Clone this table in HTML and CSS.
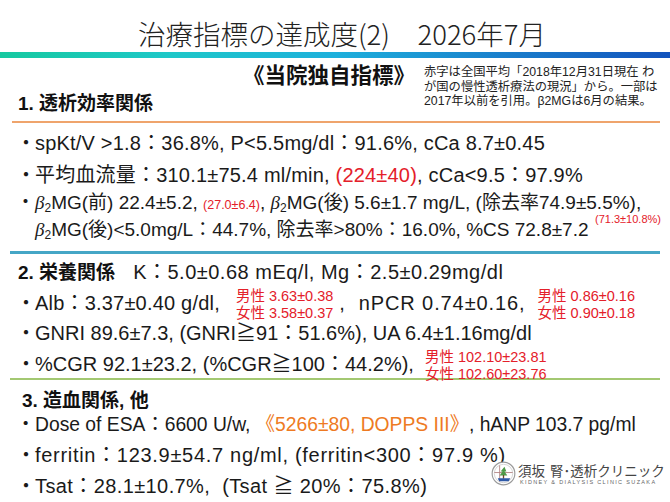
FILE: index.html
```html
<!DOCTYPE html>
<html lang="ja">
<head>
<meta charset="utf-8">
<link rel="stylesheet" href="styles.css">
</head>
<body>
<div class="page">
  <h1 class="title">治療指標の達成度(2)　2026年7月</h1>
  <div class="bar"></div>

  <div class="s1head">
    <div class="s1left">
      <div class="badge">《当院独自指標》</div>
      <h2 class="sh sh1">1. 透析効率関係</h2>
    </div>
    <p class="note">赤字は全国平均「2018年12月31日現在 わ<br>が国の慢性透析療法の現況」から。一部は<br>2017年以前を引用。β2MGは6月の結果。</p>
  </div>
  <div class="rule orange"></div>

  <div class="row r1"><span class="bul">・</span>spKt/V &gt;1.8：36.8%, P&lt;5.5mg/dl：91.6%, cCa 8.7±0.45</div>
  <div class="row r2"><span class="bul">・</span>平均血流量：310.1±75.4 ml/min, <span class="red">(224±40)</span>, cCa&lt;9.5：97.9%</div>
  <div class="beta">
    <div class="brow b1"><span class="bul">・</span><i class="b">β</i><sub>2</sub>MG(前) 22.4±5.2, <span class="red sm">(27.0±6.4)</span>, <i class="b">β</i><sub>2</sub>MG(後) 5.6±1.7 mg/L, (除去率74.9±5.5%),</div>
    <div class="brow b2"><i class="b">β</i><sub>2</sub>MG(後)&lt;5.0mg/L：44.7%, 除去率&gt;80%：16.0%, %CS 72.8±7.2</div>
    <span class="red ref71">(71.3±10.8%)</span>
  </div>
  <div class="rule blue"></div>

  <div class="row s2h"><span class="sh">2. 栄養関係</span><span class="k">K：5.0±0.68 mEq/l, Mg：2.5±0.29mg/dl</span></div>
  <div class="row r-alb"><span class="bul">・</span>Alb：3.37±0.40 g/dl,<span class="stack s-alb"><span>男性 3.63±0.38</span><span>女性 3.58±0.37</span></span><span class="npcr">,&nbsp; nPCR 0.74±0.16,</span><span class="stack s-npcr"><span>男性 0.86±0.16</span><span>女性 0.90±0.18</span></span></div>
  <div class="row r-gnri"><span class="bul">・</span>GNRI 89.6±7.3, (GNRI≧91：51.6%), UA 6.4±1.16mg/dl</div>
  <div class="row r-cgr"><span class="bul">・</span>%CGR 92.1±23.2, (%CGR≧100：44.2%),<span class="stack s-cgr"><span>男性 102.10±23.81</span><span>女性 102.60±23.76</span></span></div>
  <div class="rule green"></div>

  <div class="row s3h"><span class="sh">3. 造血関係, 他</span></div>
  <div class="row r-esa"><span class="bul">・</span>Dose of ESA：6600 U/w, <span class="orange-t">《5266±80, DOPPS III》</span>, hANP 103.7 pg/ml</div>
  <div class="row r-fer"><span class="bul">・</span>ferritin：123.9±54.7 ng/ml, (ferritin&lt;300：97.9 %)</div>
  <div class="row r-tsat"><span class="bul">・</span>Tsat：28.1±10.7%,&nbsp; (Tsat ≧ 20%：75.8%)</div>

  <div class="logo">
    <svg class="emblem" width="25" height="25" viewBox="0 0 26 26">
      <circle cx="13" cy="13" r="11.8" fill="#fff" stroke="#9a9a9a" stroke-width="1.2"/>
      <circle cx="13" cy="13" r="9.6" fill="none" stroke="#c9c9c9" stroke-width="0.8"/>
      <path d="M3.5 12 H22.5 M9 4.5 V21.5" stroke="#b08080" stroke-width="0.9" fill="none"/>
      <path d="M14 6 L10 11 H12 L9 15 H17 L14 11 H16 Z" fill="#4d9a48"/>
      <rect x="12.3" y="14.5" width="1.4" height="4" fill="#6b4a2a"/>
      <path d="M7 18 H20 L18.5 21 H8.5 Z" fill="#2f5aa8"/>
    </svg>
    <div class="ltext">
      <div class="lname">須坂<span class="gap"></span>腎･透析クリニック</div>
      <div class="lsub">KIDNEY &amp; DIALYSIS CLINIC SUZAKA</div>
    </div>
  </div>
</div>
</body>
</html>
```
FILE: styles.css
```css
* { box-sizing: border-box; }
html, body { margin: 0; padding: 0; background: #fff; }
body {
  font-family: "Liberation Sans", "Noto Sans CJK JP", sans-serif;
  color: #1a1a1a;
}
.page { position: relative; width: 670px; height: 502px; overflow: hidden; }

.title {
  margin: 0;
  height: 52px;
  padding-top: 16px;
  padding-left: 14px;
  font-size: 27.5px;
  line-height: 34px;
  font-weight: 300;
  text-align: center;
  color: #222;
  font-family: "Noto Sans CJK JP", sans-serif;
}
.bar {
  height: 6px;
  background: linear-gradient(90deg, #16c9a0 0%, #1ec8c8 25%, #1eb0dc 50%, #1a7fcc 75%, #1353bd 100%);
}

.s1head { display: flex; height: 63px; }
.s1left { width: 420px; }
.badge {
  margin-top: 5px;
  padding-right: 5px;
  text-align: right;
  font-size: 21.5px;
  line-height: 26px;
  font-weight: 700;
  color: #111;
}
.sh { font-weight: 700; font-size: 19px; color: #111; }
.sh1 { margin: 3px 0 0 18px; line-height: 24px; }
.note {
  margin: 7px 0 0 4px;
  font-size: 12.3px;
  line-height: 14.5px;
  color: #222;
  white-space: nowrap;
}

.rule { height: 2px; margin: 0 10px 0 12px; }
.orange { background: #efa46c; }
.blue { background: #45a6c6; height: 3px; margin-left: 10px; }
.green { background: #a3c872; margin-left: 10px; }

.row {
  padding-left: 16px;
  font-size: 20px;
  letter-spacing: 0.2px;
  white-space: nowrap;
}
.bul { display: inline-block; width: 19px; letter-spacing: 0; }
.r1 { height: 36px; line-height: 40px; }
.r2 { height: 31px; line-height: 33px; }
.red { color: #e4202a; }
.orange-t { color: #ee7a22; }
.sm { font-size: 12.5px; letter-spacing: 0; }

.beta { position: relative; font-size: 19px; padding-left: 16px; height: 61px; }
.brow { white-space: nowrap; }
.b1 { height: 25px; line-height: 26px; }
.b2 { height: 29px; line-height: 29px; padding-left: 19px; }
.b { font-style: italic; font-family: "Liberation Serif", serif; }
sub { font-size: 12px; vertical-align: -3px; line-height: 0; }
.ref71 { position: absolute; left: 595px; top: 22px; font-size: 11px; line-height: 14px; }

.s2h { height: 34px; line-height: 36px; padding-left: 18px; }
.s2h .sh { font-size: 19px; letter-spacing: 0; }
.s2h .k { margin-left: 18px; letter-spacing: 0.5px; }
.r-alb { height: 29px; line-height: 29px; }
.r-gnri { height: 32px; line-height: 33px; letter-spacing: 0; }
.r-cgr { height: 29px; line-height: 27px; letter-spacing: 0; }
.stack {
  display: inline-flex;
  flex-direction: column;
  vertical-align: middle;
  font-size: 14.5px;
  line-height: 17px;
  letter-spacing: 0;
  color: #e4202a;
}
.s-alb { margin-left: 16px; }
.npcr { margin-left: 6px; letter-spacing: 0.9px; }
.s-npcr { margin-left: 12px; }
.s-cgr { margin-left: 11px; }

.s3h { height: 32px; line-height: 28px; padding-top: 6px; padding-left: 22px; letter-spacing: 0; }
.r-esa { height: 26px; line-height: 26px; font-size: 19.3px; letter-spacing: 0; }
.r-fer { height: 33px; line-height: 34px; letter-spacing: 0.7px; }
.r-tsat { height: 31px; line-height: 31px; letter-spacing: 0.4px; }

.logo {
  position: absolute;
  left: 491px;
  top: 461px;
  display: flex;
  align-items: center;
  gap: 2px;
}
.ltext { display: flex; flex-direction: column; white-space: nowrap; }
.lname {
  font-family: "Noto Sans CJK JP", sans-serif;
  font-size: 13.5px;
  line-height: 17px;
  color: #444;
}
.gap { display: inline-block; width: 5px; }
.lsub {
  font-size: 5.5px;
  line-height: 7px;
  color: #666;
  letter-spacing: 1.35px;
  padding-left: 2px;
}
```
